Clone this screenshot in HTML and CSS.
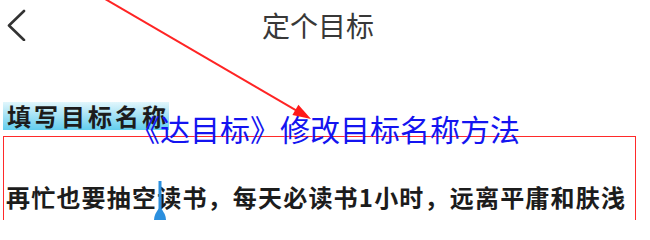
FILE: index.html
```html
<!DOCTYPE html>
<html lang="zh-CN">
<head>
<meta charset="utf-8">
<title>定个目标</title>
<link rel="stylesheet" href="styles.css">
</head>
<body>
<div class="header">
  <svg class="back" viewBox="0 0 20 32" width="20" height="32"><path d="M17 2 L2 16.5 L17 31" fill="none" stroke="#333" stroke-width="2.6" stroke-linecap="round" stroke-linejoin="round"/></svg>
  <div class="title">定个目标</div>
</div>
<div class="field-label">填写目标名称</div>
<div class="box">
  <div class="body-text">再忙也要抽空读书，每天必读书1小时，远离平庸和肤浅</div>
</div>
<svg class="cursor" viewBox="0 0 12 39" width="12" height="39"><rect x="4.5" y="0" width="3" height="31" fill="#2b8fde"/><path d="M6 26 Q12 33 12 39 L0 39 Q0 33 6 26 Z" fill="#2b8fde"/></svg>
<div class="caption">《达目标》修改目标名称方法</div>
<svg class="arrow" viewBox="0 0 650 220" width="650" height="220"><line x1="100" y1="-4" x2="297" y2="110.8" stroke="#ff2424" stroke-width="2"/><polygon points="311,119 292.4,115.1 298.4,104.8" fill="#ff1a1a"/></svg>
</body>
</html>
```
FILE: styles.css
```css
html, body {
  margin: 0;
  padding: 0;
  background: #ffffff;
}
body {
  position: relative;
  width: 650px;
  height: 220px;
  overflow: hidden;
  font-family: "Noto Sans CJK SC", "Noto Sans", sans-serif;
}
.header {
  display: flex;
  align-items: center;
  height: 50px;
  padding-left: 7px;
}
.back {
  flex: none;
  display: block;
}
.title {
  flex: 1;
  text-align: center;
  font-size: 28px;
  line-height: 28px;
  color: #383838;
  padding-right: 41px;
}
.field-label {
  width: max-content;
  margin: 52px 0 0 3px;
  padding: 0 0 0 4px;
  font-size: 24px;
  line-height: 28px;
  font-weight: 700;
  letter-spacing: 3px;
  color: #1c1c1c;
  background: linear-gradient(#e2f6fc, #62cdee);
}
.box {
  box-sizing: border-box;
  margin: 6px 0 0 3px;
  width: 633px;
  height: 84px;
  border: 1.5px solid #ff2a2a;
  border-bottom: none;
  padding: 45px 0 0 2px;
}
.body-text {
  font-size: 24px;
  line-height: 30px;
  font-weight: 700;
  letter-spacing: 1.2px;
  color: #1c1c1c;
  white-space: nowrap;
}
.caption {
  position: absolute;
  left: 130px;
  top: 113px;
  font-size: 30px;
  line-height: 30px;
  color: #1414f0;
  white-space: nowrap;
}
.cursor {
  position: absolute;
  left: 154px;
  top: 181px;
}
.arrow {
  position: absolute;
  left: 0;
  top: 0;
  pointer-events: none;
}
```
